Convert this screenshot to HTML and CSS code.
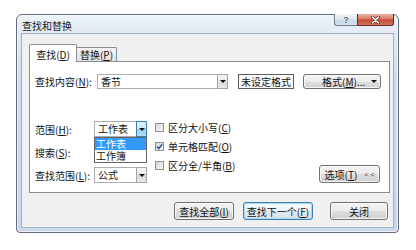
FILE: index.html
```html
<!DOCTYPE html>
<html lang="zh-CN">
<head>
<meta charset="utf-8">
<title>查找和替换</title>
<link rel="stylesheet" href="styles.css">
</head>
<body>
<div class="window">
  <div class="titlebar">
    <span class="title">查找和替换</span>
    <div class="caption">
      <div class="cap help">?</div>
      <div class="cap close">
        <svg width="11" height="8" viewBox="0 0 11 8"><path d="M2.5 1.2 L8.5 6.8 M8.5 1.2 L2.5 6.8" stroke="#6a2016" stroke-width="3" stroke-linecap="round" fill="none"/><path d="M2.5 1.2 L8.5 6.8 M8.5 1.2 L2.5 6.8" stroke="#fff" stroke-width="1.6" stroke-linecap="round" fill="none"/></svg>
      </div>
    </div>
  </div>
  <div class="client">
    <div class="tabs">
      <div class="tab active">查找(<u>D</u>)</div>
      <div class="tab">替换(<u>P</u>)</div>
    </div>
    <div class="panel">
      <div class="row1">
        <span class="label lbl-find">查找内容(<u>N</u>):</span>
        <div class="combo combo-find"><span class="field-text">香节</span><span class="dd"><i class="tri"></i></span></div>
        <div class="fmt-preview">未设定格式</div>
        <div class="btn btn-format"><span>格式(<u>M</u>)...</span><i class="tri"></i></div>
      </div>
      <div class="lower">
        <div class="opts-grid">
          <span class="label">范围(<u>H</u>):</span>
          <div class="combo small">
            <span class="field-text">工作表</span><span class="dd pressed"><i class="tri"></i></span>
            <ul class="popup">
              <li class="sel">工作表</li>
              <li>工作簿</li>
            </ul>
          </div>
          <span class="label">搜索(<u>S</u>):</span>
          <div class="combo small"><span class="field-text"></span><span class="dd"><i class="tri"></i></span></div>
          <span class="label">查找范围(<u>L</u>):</span>
          <div class="combo small"><span class="field-text">公式</span><span class="dd"><i class="tri"></i></span></div>
        </div>
        <div class="checks">
          <div class="check"><span class="box"></span>区分大小写(<u>C</u>)</div>
          <div class="check"><span class="box"><svg width="7" height="7" viewBox="0 0 7 7"><path d="M1 3.6 L2.9 5.5 L6.2 1.2" stroke="#34589f" stroke-width="1.5" fill="none"/></svg></span>单元格匹配(<u>O</u>)</div>
          <div class="check"><span class="box"></span>区分全/半角(<u>B</u>)</div>
        </div>
        <div class="btn btn-options"><span>选项(<u>T</u>)</span><span class="chev">&lt; &lt;</span></div>
      </div>
    </div>
    <div class="footer">
      <div class="btn b-all">查找全部(<u>I</u>)</div>
      <div class="btn b-next focus">查找下一个(<u>F</u>)</div>
      <div class="btn b-close">关闭</div>
    </div>
  </div>
</div>
</body>
</html>
```
FILE: styles.css
```css
* { box-sizing: border-box; }
html, body { margin: 0; padding: 0; }
body {
  width: 416px;
  height: 250px;
  overflow: hidden;
  background: #fff;
  padding: 14px 0 0 16px;
  font-family: "Noto Sans CJK SC", "Liberation Sans", sans-serif;
  font-size: 10px;
  color: #111;
}
u { text-decoration: underline; text-underline-offset: 1px; }

.window {
  width: 383px;
  height: 219px;
  border: 1px solid #5e6b7b;
  border-radius: 6px 6px 4px 4px;
  background: linear-gradient(#eef3f9 0, #e2eaf4 18px, #d0ddec 60px, #c8d7ea 100%);
  padding: 0 4px 4px;
  display: flex;
  flex-direction: column;
  box-shadow: inset 0 0 0 1px rgba(255,255,255,0.65);
}
.titlebar { height: 18px; flex: none; display: flex; align-items: flex-start; }
.title { margin-left: 1px; margin-top: 5px; line-height: 12px; color: #1a1a1a; }
.caption { margin-left: auto; margin-top: -1px; display: flex; height: 12px; }
.cap { height: 12px; display: flex; align-items: center; justify-content: center; }
.help {
  width: 23px;
  border: 1px solid #6f7d90;
  border-top: none;
  border-right: none;
  border-radius: 0 0 0 3px;
  background: linear-gradient(#f2f6fa, #dce5ef 50%, #c9d6e6 52%, #d3dfec);
  color: #56667e;
  font-family: "Liberation Sans", sans-serif;
  font-weight: bold;
  font-size: 9px;
  text-shadow: 0 0 1px #fff;
}
.close {
  width: 37px;
  border: 1px solid #6b2a22;
  border-top: none;
  border-radius: 0 0 3px 0;
  background: linear-gradient(#eab0a2, #d97b66 45%, #c84b35 52%, #d2735e);
}

.client {
  flex: 1;
  border: 1px solid #a3b1c3;
  background: #f0f0f0;
  padding: 10px 3px 0 7px;
  display: flex;
  flex-direction: column;
}
.tabs { display: flex; align-items: flex-end; height: 17px; flex: none; position: relative; z-index: 2; }
.tab {
  border: 1px solid #898c95;
  border-bottom: none;
  display: flex;
  align-items: center;
  justify-content: center;
}
.tab.active { width: 48px; height: 18px; margin-bottom: -1px; background: #fff; border-radius: 2px 2px 0 0; padding-top: 1px; }
.tab:not(.active) { width: 40px; height: 14px; border-left: none; background: linear-gradient(#f3f3f3, #e2e2e2); border-radius: 0 2px 0 0; }

.panel {
  height: 132px;
  flex: none;
  border: 1px solid #898c95;
  background: #fff;
  padding: 12px 0 0 5px;
  position: relative;
  z-index: 1;
}
.row1 { display: flex; align-items: center; height: 15px; }
.lbl-find { width: 62px; }
.combo {
  position: relative;
  display: flex;
  border: 1px solid #abadb3;
  background: #fff;
  height: 15px;
}
.combo-find { width: 131px; }
.field-text { flex: 1; padding-left: 3px; line-height: 13px; white-space: nowrap; overflow: hidden; }
.dd {
  width: 11px;
  margin: -1px -1px -1px 0;
  border: 1px solid #a3a3a3;
  background: linear-gradient(#f6f6f6, #e6e6e6 50%, #d9d9d9 52%, #e8e8e8);
  display: flex;
  align-items: center;
  justify-content: center;
}
.dd.pressed {
  border-color: #3c7fb1;
  background: linear-gradient(#e3f3fd, #c4e5f8 50%, #98d1f3 52%, #b3def6);
}
.tri {
  width: 0;
  height: 0;
  border-left: 3px solid transparent;
  border-right: 3px solid transparent;
  border-top: 3px solid #111;
}
.fmt-preview {
  width: 56px;
  height: 15px;
  margin-left: 10px;
  border: 1px solid #5c5c5c;
  background: #fbfbfb;
  display: flex;
  align-items: center;
  justify-content: center;
}
.btn {
  display: flex;
  align-items: center;
  justify-content: center;
  border: 1px solid #707070;
  border-radius: 3px;
  background: linear-gradient(#f3f3f3 0%, #ececec 50%, #dedede 52%, #d0d0d0 100%);
  box-shadow: inset 0 0 0 1px rgba(255,255,255,0.75);
  color: #111;
  white-space: nowrap;
}
.btn-format { width: 78px; height: 15px; margin-left: 9px; justify-content: flex-start; padding: 0 3px 0 18px; }
.btn-format .tri { margin-left: auto; }

.lower { display: flex; margin-top: 29px; height: 65px; padding-right: 9px; }
.opts-grid {
  display: grid;
  grid-template-columns: 59px 53px;
  grid-template-rows: 16px 16px 16px;
  row-gap: 7px;
  padding-top: 3px;
  align-items: center;
}
.combo.small { height: 16px; }
.combo.small .field-text { line-height: 14px; }
.popup {
  position: absolute;
  left: -1px;
  top: 15px;
  width: 53px;
  margin: 0;
  padding: 0;
  list-style: none;
  border: 1px solid #646464;
  background: #fff;
  z-index: 5;
}
.popup li { height: 12px; line-height: 12px; padding-left: 1px; }
.popup li.sel { background: #3399ff; color: #fff; }

.checks { margin-left: 8px; display: flex; flex-direction: column; }
.check { height: 19px; display: flex; align-items: center; white-space: nowrap; }
.box {
  width: 9px;
  height: 9px;
  margin-right: 4px;
  border: 1px solid #8e8f8f;
  background: linear-gradient(135deg, #d3d6da, #f7f7f7);
  display: flex;
  align-items: center;
  justify-content: center;
}
.btn-options { margin-left: auto; align-self: flex-end; width: 61px; height: 18px; gap: 7px; }
.chev { font-family: "Liberation Sans", sans-serif; font-size: 8px; color: #555; letter-spacing: -0.5px; }

.footer { display: flex; justify-content: flex-end; padding: 9px 2px 0 0; }
.footer .btn { height: 18px; }
.b-all { width: 60px; }
.b-next { width: 70px; margin-left: 9px; }
.b-close { width: 58px; margin-left: 17px; }
.btn.focus {
  border-color: #3c7fb1;
  box-shadow: inset 0 0 0 1px #a9daf5;
  background: linear-gradient(#f6fafd, #edf4f9 50%, #e0ebf3 52%, #d5e4ef);
}
```
